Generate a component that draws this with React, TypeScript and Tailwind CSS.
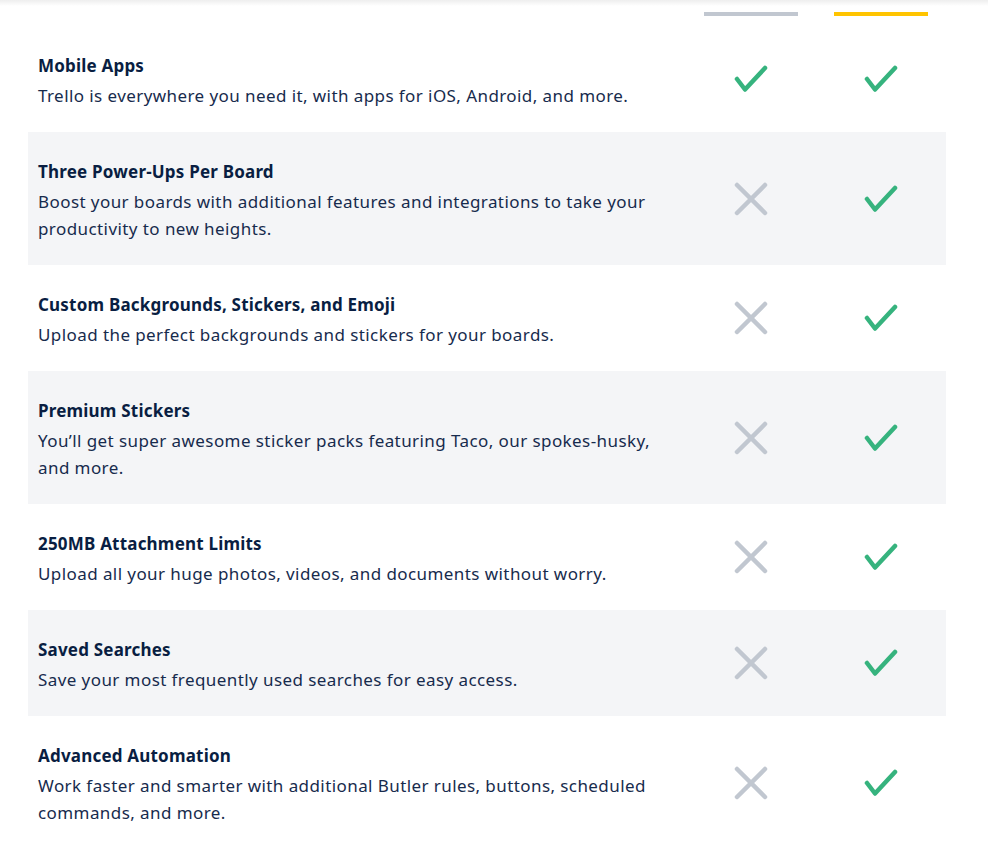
import React from "react";

const rows = [
  { t: "Mobile Apps", d: "Trello is everywhere you need it, with apps for iOS, Android, and more.", free: true },
  { t: "Three Power-Ups Per Board", d: "Boost your boards with additional features and integrations to take your productivity to new heights.", free: false },
  { t: "Custom Backgrounds, Stickers, and Emoji", d: "Upload the perfect backgrounds and stickers for your boards.", free: false },
  { t: "Premium Stickers", d: "You\u2019ll get super awesome sticker packs featuring Taco, our spokes-husky, and more.", free: false },
  { t: "250MB Attachment Limits", d: "Upload all your huge photos, videos, and documents without worry.", free: false },
  { t: "Saved Searches", d: "Save your most frequently used searches for easy access.", free: false },
  { t: "Advanced Automation", d: "Work faster and smarter with additional Butler rules, buttons, scheduled commands, and more.", free: false },
];

function Check() {
  return (
    <svg width="34" height="30" viewBox="0 0 34 30" fill="none">
      <path d="M3 15 L11 25.5 L31 4" stroke="#36B37E" strokeWidth="4.5" strokeLinecap="round" strokeLinejoin="round" />
    </svg>
  );
}

function Cross() {
  return (
    <svg width="34" height="34" viewBox="0 0 34 34" fill="none">
      <path d="M3 3 L31 31 M31 3 L3 31" stroke="#C1C7D0" strokeWidth="4.5" strokeLinecap="round" />
    </svg>
  );
}

export default function App() {
  return (
    <div className="min-h-[847px] bg-white relative" style={{ fontFamily: '"Noto Sans", "Open Sans", sans-serif' }}>
      <div className="absolute top-0 left-0 right-0 h-[6px] bg-gradient-to-b from-[#eeeeee] to-white" />
      <div className="w-[918px] ml-[28px]">
        <div className="flex h-[26px] items-start pt-[12px]">
          <div className="w-[658px]" />
          <div className="w-[130px] flex justify-center"><div className="w-[94px] h-[4px] bg-[#C1C7D0]" /></div>
          <div className="w-[130px] flex justify-center"><div className="w-[94px] h-[4px] bg-[#FFC400]" /></div>
        </div>
        {rows.map((r, i) => (
          <div key={i} className={`flex items-center ${i % 2 === 1 ? "bg-[#F4F5F7]" : "bg-white"}`}>
            <div className="w-[658px] pl-[10px] pr-[20px] pt-[26px] pb-[23px]">
              <div className="text-[17px] leading-[27px] font-bold tracking-[0.2px] text-[#091E42]">{r.t}</div>
              <div className="mt-[3px] text-[17px] leading-[27px] tracking-[0.42px] text-[#172B4D]">{r.d}</div>
            </div>
            <div className="w-[130px] flex justify-center">{r.free ? <Check /> : <Cross />}</div>
            <div className="w-[130px] flex justify-center"><Check /></div>
          </div>
        ))}
      </div>
    </div>
  );
}
